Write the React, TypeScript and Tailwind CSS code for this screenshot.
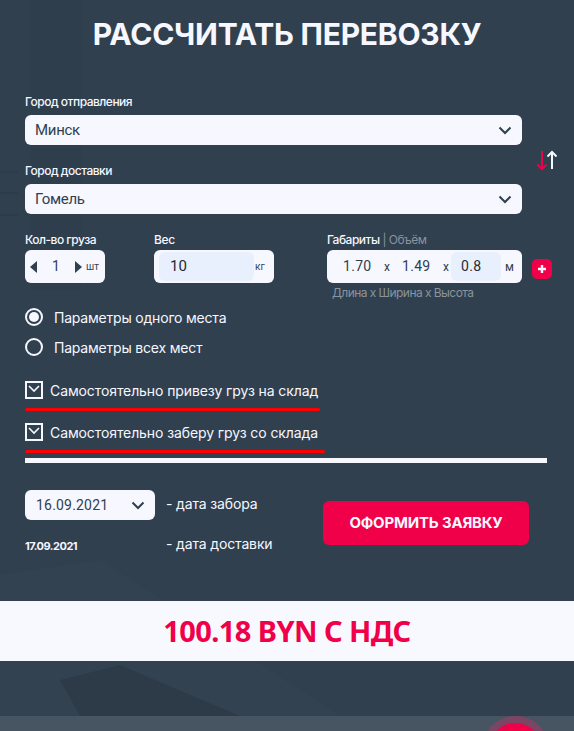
import React from "react";

const font = { fontFamily: '"Inter", "Noto Sans", sans-serif' };
const values = { fontFamily: '"Roboto", "Noto Sans", sans-serif' };

function Chevron({ className = "" }: { className?: string }) {
  return (
    <svg width="14" height="9" viewBox="0 0 14 9" className={className} fill="none">
      <path d="M1.5 1.5 7 7l5.5-5.5" stroke="#30404f" strokeWidth="2" />
    </svg>
  );
}

function CitySelect({ label, value }: { label: string; value: string }) {
  return (
    <div className="flex flex-col w-[497px]">
      <div className="h-[19px] text-[12px] leading-[12px] font-medium text-[#f6f7ff] tracking-[-0.5px]">{label}</div>
      <div className="h-[30px] rounded-[6px] bg-[#f6f7ff] flex items-center justify-between pl-[10px] pr-[10px]">
        <span className="text-[15px] text-[#30404f] tracking-[-0.3px]" style={values}>{value}</span>
        <Chevron />
      </div>
    </div>
  );
}

function Radio({ checked, label }: { checked?: boolean; label: string }) {
  return (
    <div className="flex items-center h-[30px]">
      <div className="w-[18px] h-[18px] rounded-full border-2 border-[#f6f7ff] flex items-center justify-center mr-[11px]">
        {checked && <div className="w-[10px] h-[10px] rounded-full bg-[#f6f7ff]" />}
      </div>
      <span className="text-[14px] text-[#f6f7ff] tracking-[-0.2px]">{label}</span>
    </div>
  );
}

function Check({ label, line }: { label: string; line: string }) {
  return (
    <div className="flex flex-col">
      <div className="flex items-center h-[26px]">
        <div className="w-[18px] h-[18px] border-2 border-[#f6f7ff] flex items-start justify-center pt-[2px] mr-[7px]">
          <svg width="12" height="8" viewBox="0 0 12 8" fill="none">
            <path d="M1 1l5 5 5-5" stroke="#f6f7ff" strokeWidth="1.6" />
          </svg>
        </div>
        <span className="text-[14px] text-[#f6f7ff] tracking-[-0.1px] whitespace-nowrap">{label}</span>
      </div>
      <div className={`h-[3px] bg-[#ff0000] rounded-full mt-[5px] ${line}`} />
    </div>
  );
}

export default function App() {
  return (
    <div className="relative w-[574px] h-[731px] overflow-hidden bg-[#30404f]" style={font}>
      <svg className="absolute left-0 top-0 pointer-events-none" width="574" height="716" viewBox="0 0 574 716" fill="none">
        <rect x="31" y="0" width="50" height="290" fill="#2b3b49" opacity="0.5" />
        <path d="M0 172h18M0 193h18M0 215h18" stroke="#2a3845" strokeWidth="1" />
        <path d="M0 575 100 560 340 716H0Z" fill="#364655" opacity="0.4" />
        <path d="M60 680 120 665 240 716H80Z" fill="#293744" opacity="0.6" />
      </svg>

      <div className="relative flex flex-col">
        <h1 className="h-[69px] pt-[16px] text-center text-[30px] leading-[36px] font-bold text-[#f6f7ff] tracking-[-0.25px]">
          РАССЧИТАТЬ ПЕРЕВОЗКУ
        </h1>

        <div className="pl-[25px] pt-[27px] flex">
          <div className="flex flex-col gap-[20px]">
            <CitySelect label="Город отправления" value="Минск" />
            <CitySelect label="Город доставки" value="Гомель" />
          </div>
          <div className="flex pt-[54px] pl-[14px] h-fit">
            <svg width="24" height="22" viewBox="0 0 24 22" fill="none">
              <path d="M6 1v18M1.5 14.5 6 19l4.5-4.5" stroke="#ef0049" strokeWidth="2" />
              <path d="M16 19V2M11.5 6.5 16 2l4.5 4.5" stroke="#f6f7ff" strokeWidth="2" />
            </svg>
          </div>
        </div>

        <div className="pl-[25px] pt-[17px] flex">
          <div className="w-[129px] flex flex-col">
            <div className="h-[19px] text-[12px] leading-[14px] font-medium text-[#f6f7ff] tracking-[-0.5px] pt-[2px]">Кол-во груза</div>
            <div className="w-[80px] h-[33px] rounded-[6px] bg-[#f6f7ff] flex items-center pl-[5px] text-[#30404f]">
              <svg width="7" height="12" viewBox="0 0 7 12"><path d="M7 0v12L0 6Z" fill="#30404f" /></svg>
              <span className="w-[38px] text-center text-[14px]" style={values}>1</span>
              <svg width="7" height="12" viewBox="0 0 7 12"><path d="M0 0v12l7-6Z" fill="#30404f" /></svg>
              <span className="ml-[4px] text-[10px]">шт</span>
            </div>
          </div>
          <div className="w-[173px] flex flex-col">
            <div className="h-[19px] text-[12px] leading-[14px] font-medium text-[#f6f7ff] tracking-[-0.3px] pt-[2px]">Вес</div>
            <div className="w-[120px] h-[33px] rounded-[6px] bg-[#f6f7ff] flex items-center pl-[5px]">
              <div className="w-[95px] h-[29px] rounded-[6px] bg-[#e8f0fe] flex items-center pl-[11px] text-[15px] text-[#1d2a36]" style={values}>10</div>
              <span className="ml-[1px] text-[10px] text-[#30404f]">кг</span>
            </div>
          </div>
          <div className="flex flex-col">
            <div className="h-[19px] text-[12px] leading-[14px] pt-[2px] tracking-[-0.5px] whitespace-nowrap">
              <span className="font-medium text-[#f6f7ff]">Габариты</span>
              <span className="text-[#8b939d]"> | Объём</span>
            </div>
            <div className="flex items-center">
              <div className="w-[195px] h-[33px] rounded-[6px] bg-[#f6f7ff] flex items-center text-[14px] text-[#30404f]" style={values}>
                <span className="w-[57px] pl-[16px] tracking-[0.3px]">1.70</span>
                <span className="w-[18px] text-[12px]">x</span>
                <span className="w-[41px] tracking-[0.3px]">1.49</span>
                <span className="w-[8px] text-[12px]">x</span>
                <div className="w-[50px] h-[29px] rounded-[6px] bg-[#e8f0fe] flex items-center pl-[10px] text-[#1d2a36] tracking-[0.3px]">0.8</div>
                <span className="ml-[2px] pl-[2px] text-[12px]">м</span>
              </div>
              <div className="ml-[10px] mt-[4px] w-[20px] h-[20px] rounded-[5px] bg-[#ef0049] flex items-center justify-center">
                <svg width="10" height="10" viewBox="0 0 10 10"><path d="M5 1v8M1 5h8" stroke="#f6f7ff" strokeWidth="2.4" /></svg>
              </div>
            </div>
            <div className="pl-[5px] pt-[2px] text-[12px] leading-[16px] text-[#8b939d] tracking-[-0.55px] whitespace-nowrap">Длина x Ширина x Высота</div>
          </div>
        </div>

        <div className="pl-[25px] pt-[1px] flex flex-col">
          <Radio checked label="Параметры одного места" />
          <Radio label="Параметры всех мест" />
        </div>

        <div className="pl-[25px] pt-[15px] flex flex-col gap-[8px]">
          <Check label="Самостоятельно привезу груз на склад" line="w-[295px]" />
          <Check label="Самостоятельно заберу груз со склада" line="w-[300px]" />
        </div>

        <div className="ml-[25px] mt-[5px] w-[522px] h-[5px] bg-[#f6f7ff]" />

        <div className="pl-[25px] pt-[27px] flex h-[138px]">
          <div className="w-[141px] flex flex-col">
            <div className="w-[130px] h-[30px] rounded-[6px] bg-[#f6f7ff] flex items-center justify-between pl-[11px] pr-[10px]">
              <span className="text-[14px] text-[#30404f] tracking-[0.2px]" style={values}>16.09.2021</span>
              <Chevron />
            </div>
            <div className="pt-[16px] text-[11px] leading-[20px] font-bold text-[#f6f7ff] tracking-[-0.5px]">17.09.2021</div>
          </div>
          <div className="w-[157px] flex flex-col text-[14px] text-[#f6f7ff] tracking-[-0.15px]">
            <div className="h-[28px] leading-[28px] whitespace-nowrap">- дата забора</div>
            <div className="pt-[16px] leading-[20px] whitespace-nowrap">- дата доставки</div>
          </div>
          <div className="pt-[11px]">
            <div className="w-[206px] h-[44px] rounded-[6px] bg-[#ef0049] flex items-center justify-center text-[15px] font-bold text-[#f6f7ff] tracking-[-0.2px]">
              ОФОРМИТЬ ЗАЯВКУ
            </div>
          </div>
        </div>

        <div className="h-[60px] bg-[#f8f8ff] flex items-center justify-center text-[29px] font-bold text-[#ef0049] tracking-[-0.6px]" style={{ fontFamily: '"Noto Sans", sans-serif' }}>
          100.18 BYN С НДС
        </div>

        <div className="h-[55px]" />
        <div className="relative h-[15px] bg-[#475563] overflow-hidden">
          <div className="absolute left-[482px] top-0 w-[67px] h-[67px] rounded-full bg-[#ef0049] border-[7px] border-[#7b4563] box-border" />
        </div>
      </div>
    </div>
  );
}
